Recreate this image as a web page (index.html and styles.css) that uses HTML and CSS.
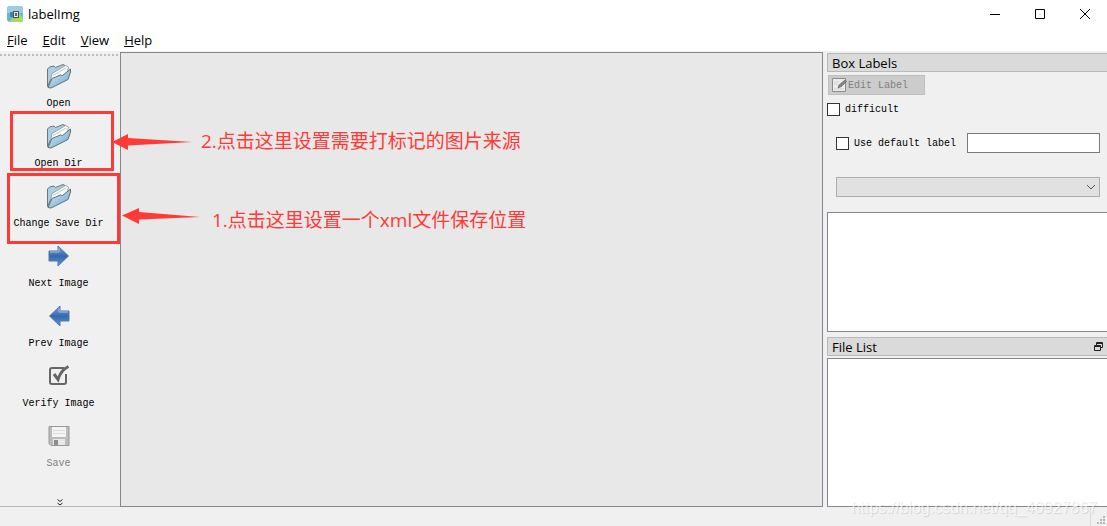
FILE: index.html
```
<!DOCTYPE html>
<html lang="en">
<head>
    <meta charset="UTF-8">
    <meta name="viewport" content="width=device-width, initial-scale=1.0">
    <title>labelImg</title>
    <link rel="stylesheet" href="styles.css">
</head>
<body>
    <!-- shared icons -->
    <svg class="defs" width="0" height="0">
        <defs>
            <linearGradient id="blue" x1="0" y1="0" x2="1" y2="1">
                <stop offset="0" stop-color="#d8eaf4"/>
                <stop offset="1" stop-color="#6ba9cc"/>
            </linearGradient>
            <linearGradient id="arrow-fill" x1="0" y1="0" x2="0" y2="1">
                <stop offset="0" stop-color="#7ea6d8"/>
                <stop offset="0.5" stop-color="#3468ae"/>
                <stop offset="1" stop-color="#5e93d3"/>
            </linearGradient>
            <symbol id="folder" viewBox="0 0 26 26">
                <path d="M1.500 23.500V6l2-2 4.500-1 1.500 1.500L17 1.500l2 1v4L5 16z" fill="#a9cfe2" stroke="#6b777e"/>
                <path d="M4 20L6 10.500 19.500 2.500l3 1.500-2 9z" fill="#fafafa" stroke="#8a8f92" stroke-width=".8"/>
                <path d="M7 12.500l13-7.500" stroke="#c4c8ca"/>
                <path d="M2 24.500L6 15.500l8.500-3.500 2 .5L24.500 6v3L22 16.500 5 25z" fill="url(#blue)" stroke="#5d707b"/>
            </symbol>
            <symbol id="arrow" viewBox="0 0 22 22">
                <path d="M1 6h9V1l10.500 10L10 21v-5H1z" fill="url(#arrow-fill)" stroke="#5577a5"/>
                <path d="M2 7h9V3.500" fill="none" stroke="#a3c0e4"/>
            </symbol>
        </defs>
    </svg>

    <header>
        <div class="title-bar">
            <svg class="logo" width="16" height="16" viewBox="0 0 16 16">
                <rect width="16" height="16" rx="3" fill="#6fb2d6"/>
                <path d="M0 3a3 3 0 0 1 3-3h10a3 3 0 0 1 3 3v4H0z" fill="#9acce6"/>
                <path d="M2 16l4-4 3 1 4-5 3 4v2a2 2 0 0 1-2 2z" fill="#a5dc5a"/>
                <rect x="3" y="6" width="3" height="5" fill="#4d819f"/>
                <rect x="6.500" y="5.500" width="5" height="6" fill="#eee" stroke="#4a5154"/>
                <path d="M8 7l2 3M10 7l-2 3" stroke="#3a3f41"/>
            </svg>
            <h1>labelImg</h1>
            <div class="window-controls">
                <button aria-label="Minimize">
                    <svg width="12" height="12"><path d="M1 6.500h10" stroke="#000"/></svg>
                </button>
                <button aria-label="Maximize">
                    <svg width="12" height="12"><path d="M1.500 1.500h9v9h-9z" fill="none" stroke="#000"/></svg>
                </button>
                <button aria-label="Close">
                    <svg width="12" height="12"><path d="M1 1l10 10M11 1L1 11" stroke="#000"/></svg>
                </button>
            </div>
        </div>
        <nav class="menu-bar">
            <a href="#"><u>F</u>ile</a>
            <a href="#"><u>E</u>dit</a>
            <a href="#"><u>V</u>iew</a>
            <a href="#"><u>H</u>elp</a>
        </nav>
    </header>

    <main>
        <div class="toolbar">
            <button class="tool"><svg width="26" height="26"><use href="#folder"/></svg>Open</button>
            <button class="tool"><svg width="26" height="26"><use href="#folder"/></svg>Open Dir</button>
            <button class="tool"><svg width="26" height="26"><use href="#folder"/></svg>Change Save Dir</button>
            <button class="tool"><svg width="22" height="22"><use href="#arrow"/></svg>Next Image</button>
            <button class="tool"><svg class="flip" width="22" height="22"><use href="#arrow"/></svg>Prev Image</button>
            <button class="tool">
                <svg width="22" height="22" viewBox="0 0 22 22" fill="none" stroke="#666">
                    <path d="M16 3H4a2 2 0 0 0-2 2v12a2 2 0 0 0 2 2h12a2 2 0 0 0 2-2V9" stroke-width="2"/>
                    <path d="M6 9l4 5.500C12 8 15 4 20.500 1.500" stroke-width="3"/>
                </svg>Verify Image
            </button>
            <button class="tool" disabled>
                <svg width="22" height="22" viewBox="0 0 22 22">
                    <path d="M1 1.500h20v19H3l-2-2z" fill="#bcbcbc" stroke="#999"/>
                    <path d="M4 2h14v10H4z" fill="#f4f4f4"/>
                    <path d="M5 5.500h12M5 8.500h12" stroke="#dcdcdc"/>
                    <path d="M5 14h12v6H5z" fill="#e8e8e8"/>
                    <path d="M6 15h4v5H6z" fill="#8d8d8d"/>
                </svg>Save
            </button>
            <button class="more" aria-label="More tools">
                <svg width="6" height="7" viewBox="0 0 6 7" fill="none" stroke="#222"><path d="M.5.500L3 2.500 5.500.5M.5 4L3 6l2.500-2"/></svg>
            </button>
        </div>

        <div class="canvas"></div>

        <aside class="docks">
            <section class="dock">
                <h2>Box Labels</h2>
                <div class="label-form">
                    <button class="edit-label" disabled>
                        <svg width="15" height="16" viewBox="0 0 15 16">
                            <path d="M.5 1.500h13v13H.5z" fill="#ececec" stroke="#8a8a8a"/>
                            <path d="M2 12h10M2 5h5M2 7h4" stroke="#cfcfcf"/>
                            <path d="M6 11l1-3 6-5 1.500 1.500-5 5z" fill="#888" stroke="#666" stroke-width=".7"/>
                        </svg>Edit Label
                    </button>
                    <label class="check"><input type="checkbox">difficult</label>
                    <div class="default-label">
                        <label class="check"><input type="checkbox">Use default label</label>
                        <input type="text" aria-label="Default label">
                    </div>
                    <div class="combo">
                        <select aria-label="Label filter" disabled></select>
                        <svg width="10" height="6" viewBox="0 0 10 6"><path d="M1 1l4 4 4-4" fill="none" stroke="#555"/></svg>
                    </div>
                </div>
                <div class="list"></div>
            </section>
            <section class="dock file-dock">
                <h2>File List
                    <button aria-label="Float">
                        <svg width="9" height="9" viewBox="0 0 9 9" fill="none" stroke="#222">
                            <path d="M2.500 3.500v-3h6v5h-2M2 1.500h7M.5 3.500h6v5h-6zM0 4.500h7"/>
                        </svg>
                    </button>
                </h2>
                <div class="list"></div>
            </section>
        </aside>
    </main>

    <footer>
        <svg width="10" height="10" fill="#b5b5b5"><path d="M6 0h2v2H6zM3 3h2v2H3zM6 3h2v2H6zM0 6h2v2H0zM3 6h2v2H3zM6 6h2v2H6z"/></svg>
    </footer>

    <!-- notes drawn over the window -->
    <div class="mark mark-open"></div>
    <div class="mark mark-save"></div>
    <svg class="pointer pointer-open" width="80" height="18" viewBox="0 0 80 18"><path d="M0 9L16 1v4l64 4-64 3.500V17z"/></svg>
    <svg class="pointer pointer-save" width="78" height="18" viewBox="0 0 78 18"><path d="M0 8.500L17 1v4l61 5-61 2.500V17z"/></svg>
    <p class="note note-open" lang="zh">2.点击这里设置需要打标记的图片来源</p>
    <p class="note note-save" lang="zh">1.点击这里设置一个xml文件保存位置</p>
    <p class="watermark">https://blog.csdn.net/qq_40927867</p>
</body>
</html>
```
FILE: styles.css
```
* {
    box-sizing: border-box;
}

body {
    display: flex;
    flex-direction: column;
    position: relative;
    height: 100vh;
    margin: 0;
    overflow: hidden;
    background-color: #f0f0f0;
    color: #000;
    font-family: "Open Sans", "Noto Sans", sans-serif;
    font-size: 13px;
}

button,
input,
select {
    margin: 0;
    padding: 0;
    border: none;
    border-radius: 0;
    background: none;
    font: inherit;
    color: inherit;
}

.defs {
    position: absolute;
}

header {
    height: 52px;
    background-color: #fff;
    border-bottom: 1px solid #f0f0f0;
}

.title-bar {
    display: flex;
    align-items: center;
    height: 27px;
    padding-left: 7px;
}

.title-bar h1 {
    flex: 1;
    margin: 0 0 0 5px;
    font-size: 13px;
    font-weight: normal;
    line-height: 16px;
}

.window-controls {
    display: flex;
}

.window-controls button {
    display: flex;
    align-items: center;
    justify-content: center;
    width: 45px;
    height: 27px;
}

.menu-bar {
    display: flex;
    gap: 15px;
    padding: 0 7px;
    line-height: 26px;
}

.menu-bar a {
    color: #000;
    text-decoration: none;
}

main {
    flex: 1;
    display: grid;
    grid-template-columns: 120px 1fr 280px;
    min-height: 0;
}

.toolbar {
    display: flex;
    flex-direction: column;
    align-items: center;
    position: relative;
    padding-top: 7px;
    border-bottom: 1px solid #b8b8b8;
}

.toolbar::before {
    content: "";
    position: absolute;
    top: 2px;
    left: 0;
    width: 100%;
    height: 2px;
    background: repeating-linear-gradient(90deg, #bdbdbd 0 2px, #f0f0f0 2px 4px);
}

.tool {
    display: grid;
    grid-template-rows: 34px 20px;
    place-items: center;
    width: 100%;
    height: 60px;
    padding-right: 3px;
    font-family: "Liberation Mono", monospace;
    font-size: 10px;
}

.tool:disabled {
    color: #808080;
}

.flip {
    transform: scaleX(-1);
}

.more {
    display: flex;
    margin-top: auto;
}

.canvas {
    margin-right: 4px;
    border: 1px solid #828790;
    background-color: #e8e8e8;
}

.docks {
    display: flex;
    flex-direction: column;
    gap: 5px;
    padding-top: 1px;
}

.dock {
    display: flex;
    flex-direction: column;
}

.dock h2 {
    display: flex;
    align-items: center;
    justify-content: space-between;
    height: 19px;
    margin: 0;
    padding: 0 4px;
    border: 1px solid #b9b9b9;
    border-right: none;
    background-color: #dadada;
    font-size: 13px;
    font-weight: normal;
    line-height: 18px;
}

.dock h2 button {
    display: flex;
}

.label-form {
    display: flex;
    flex-direction: column;
    align-items: flex-start;
    height: 140px;
    padding-top: 3px;
    font-family: "Liberation Mono", monospace;
    font-size: 10px;
}

.edit-label {
    display: flex;
    align-items: center;
    gap: 1px;
    width: 97px;
    height: 20px;
    margin-left: 1px;
    padding-left: 3px;
    border: 1px solid #bfbfbf;
    background-color: #cccccc;
    color: #808080;
}

.check {
    display: flex;
    align-items: center;
    gap: 5px;
    height: 13px;
}

.label-form > .check {
    margin-top: 8px;
}

.check input {
    appearance: none;
    width: 13px;
    height: 13px;
    border: 1px solid #333;
    background-color: #fff;
}

.default-label {
    display: flex;
    align-items: center;
    gap: 11px;
    width: 100%;
    margin-top: 17px;
    padding: 0 7px 0 9px;
}

.default-label > input {
    flex: 1;
    min-width: 0;
    height: 20px;
    border: 1px solid #7a7a7a;
    background-color: #fff;
}

.combo {
    display: grid;
    align-items: center;
    width: 100%;
    margin-top: 24px;
    padding: 0 7px 0 9px;
}

.combo select,
.combo svg {
    grid-area: 1 / 1;
}

.combo select {
    appearance: none;
    width: 100%;
    height: 20px;
    border: 1px solid #adadad;
    background-color: #e1e1e1;
    opacity: 1;
}

.combo svg {
    justify-self: end;
    margin-right: 4px;
    pointer-events: none;
}

.list {
    height: 120px;
    border: 1px solid #828790;
    border-right: none;
    background-color: #fff;
}

.file-dock {
    flex: 1;
    gap: 2px;
}

.file-dock .list {
    flex: 1;
}

footer {
    display: flex;
    align-items: flex-end;
    justify-content: flex-end;
    height: 19px;
}

footer svg {
    box-sizing: content-box;
    padding: 8px 0 0 6px;
    border-left: 1px solid #d9d9d9;
}

.mark {
    position: absolute;
    border: 3px solid #ff3936;
    pointer-events: none;
}

.mark-open {
    top: 111px;
    left: 10px;
    width: 104px;
    height: 60px;
}

.mark-save {
    top: 173px;
    left: 7px;
    width: 113px;
    height: 71px;
}

.pointer {
    position: absolute;
    fill: #ff3936;
}

.pointer-open {
    top: 133px;
    left: 112px;
}

.pointer-save {
    top: 207px;
    left: 122px;
}

.note {
    position: absolute;
    margin: 0;
    color: #ff3936;
    font-family: "Open Sans", "Noto Sans CJK SC", sans-serif;
    font-size: 19px;
    line-height: 28px;
    white-space: nowrap;
}

.note-open {
    top: 127px;
    left: 201px;
}

.note-save {
    top: 206px;
    left: 212px;
}

.watermark {
    position: absolute;
    right: 10px;
    bottom: 8px;
    margin: 0;
    color: rgba(255, 255, 255, 0.7);
    font-family: "Liberation Sans", sans-serif;
    font-size: 16px;
    line-height: 20px;
    text-shadow: 1px 1px 1px rgba(0, 0, 0, 0.12);
}
```
